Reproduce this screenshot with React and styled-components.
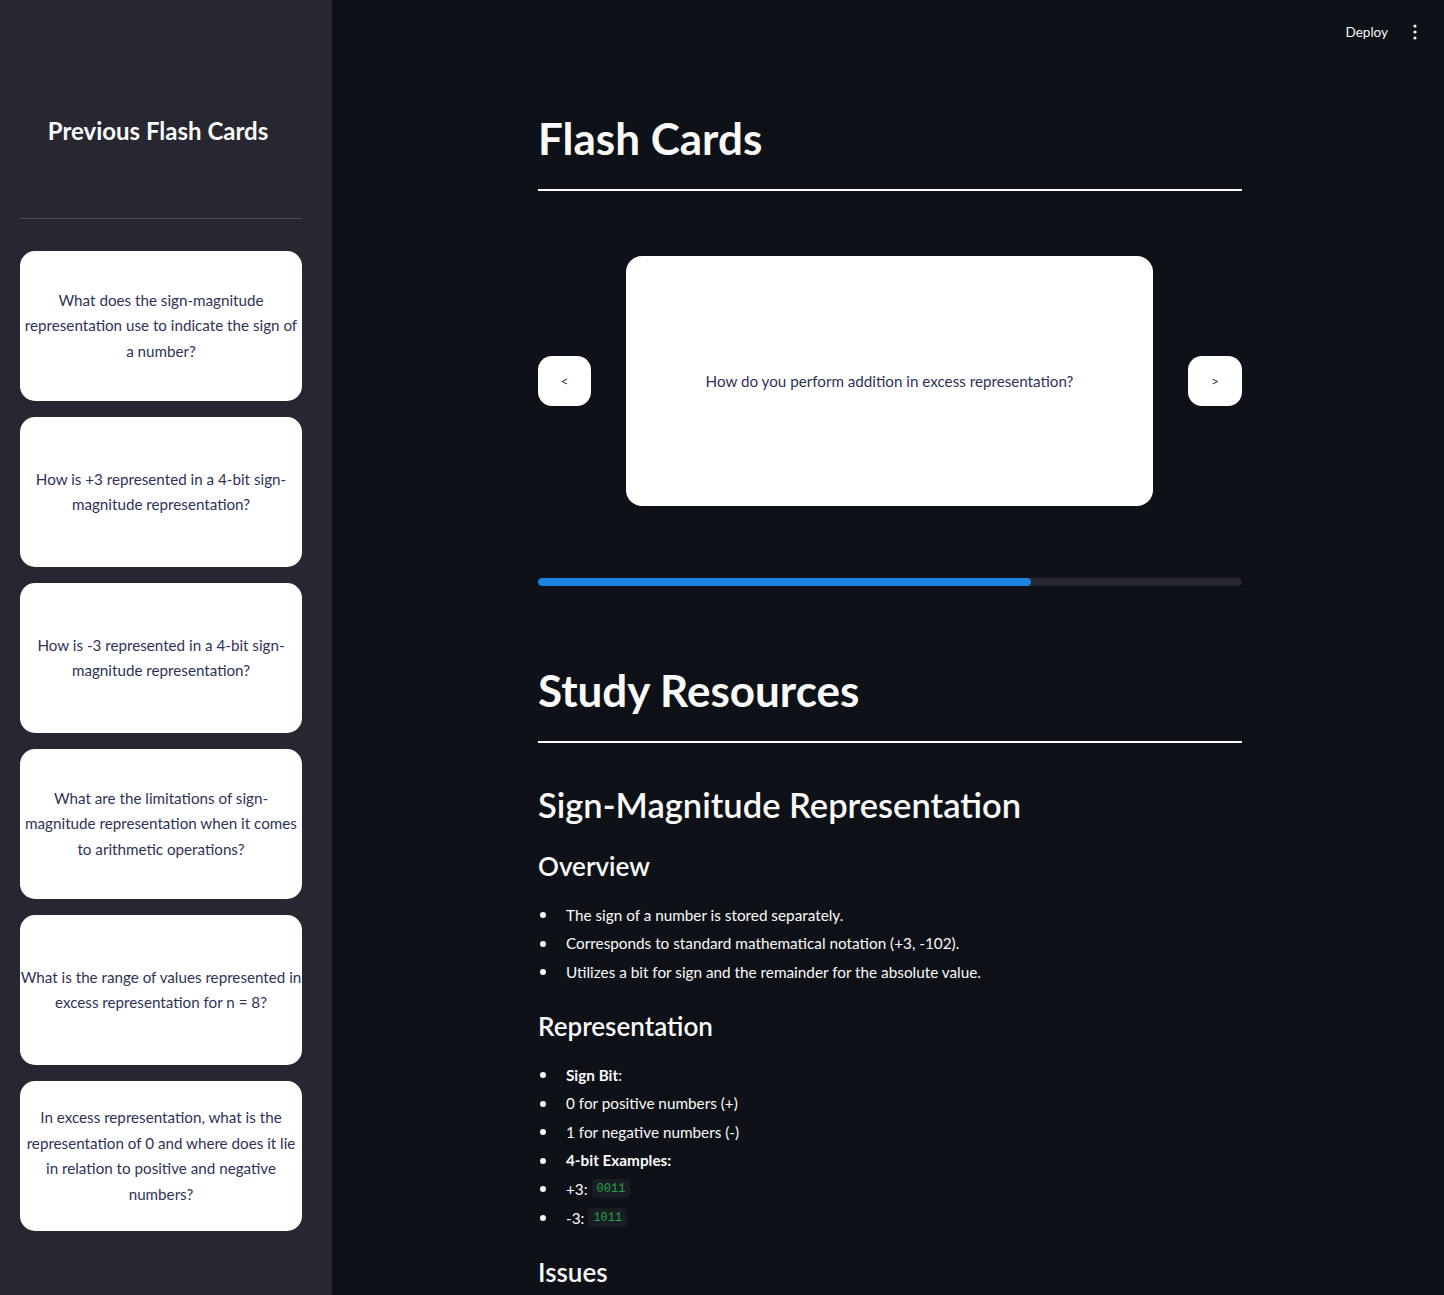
import React from "react";
import styled, { createGlobalStyle } from "styled-components";

const GlobalStyle = createGlobalStyle`
  html, body {
    margin: 0;
    padding: 0;
    height: 100%;
    overflow: hidden;
    background: #0e1117;
  }
  body {
    font-family: Lato, "Noto Sans", sans-serif;
    color: #fafafa;
  }
  * { box-sizing: border-box; }
`;

const Page = styled.div`
  display: flex;
  height: 100vh;
`;

const Sidebar = styled.aside`
  width: 332px;
  flex-shrink: 0;
  background: #262730;
  padding: 115px 30px 0 20px;
  display: flex;
  flex-direction: column;
`;

const SideTitle = styled.h2`
  margin: 0;
  font-size: 24px;
  line-height: 32px;
  font-weight: 700;
  text-align: center;
  padding-right: 6px;
  color: #fafafa;
`;

const SideRule = styled.hr`
  margin: 71px 0 32px;
  border: none;
  height: 1px;
  background: rgba(250, 250, 250, 0.2);
`;

const CardList = styled.div`
  display: flex;
  flex-direction: column;
  gap: 16px;
`;

const MiniCard = styled.div`
  height: 150px;
  background: #ffffff;
  border-radius: 15px;
  display: flex;
  align-items: center;
  justify-content: center;
  text-align: center;
  padding: 0;
  font-size: 15.2px;
  line-height: 25.5px;
  color: #2f3256;
`;

const Main = styled.main`
  flex: 1;
  display: flex;
  flex-direction: column;
  min-width: 0;
`;

const Header = styled.header`
  height: 64px;
  display: flex;
  align-items: center;
  justify-content: flex-end;
  gap: 25px;
  padding: 0 27px 0 0;
`;

const DeployButton = styled.span`
  font-size: 13.5px;
  color: #fafafa;
`;

const Content = styled.div`
  width: 704px;
  margin: 0 auto;
  padding: 48px 0 0;
  position: relative;
  left: 2px;
`;

const Title = styled.h1`
  margin: ${(p) => p.$top || 0}px 0 0;
  font-size: 44px;
  line-height: 52px;
  font-weight: 700;
  color: #fafafa;
`;

const Rule = styled.hr`
  margin: 25px 0 0;
  border: none;
  height: 2px;
  background: #fafafa;
`;

const CardRow = styled.div`
  margin-top: 65px;
  display: flex;
  align-items: center;
  justify-content: space-between;
`;

const NavButton = styled.button`
  width: ${(p) => p.$w}px;
  height: 50px;
  border: none;
  border-radius: 14px;
  background: #ffffff;
  color: #2f3256;
  font-family: inherit;
  font-size: 13px;
  cursor: pointer;
`;

const FlashCard = styled.div`
  width: 527px;
  height: 250px;
  background: #ffffff;
  border-radius: 16px;
  display: flex;
  align-items: center;
  justify-content: center;
  text-align: center;
  font-size: 15.2px;
  color: #2f3256;
`;

const Track = styled.div`
  margin-top: 72px;
  height: 8px;
  border-radius: 4px;
  background: #262730;
  overflow: hidden;
`;

const Fill = styled.div`
  height: 100%;
  border-radius: 4px;
  background: #1c83e1;
`;

const SubTitle = styled.h2`
  margin: 40px 0 0;
  font-size: 34.5px;
  line-height: 44px;
  font-weight: 600;
  color: #fafafa;
`;

const Section = styled.h3`
  margin: ${(p) => p.$top}px 0 0;
  font-size: 26px;
  line-height: 36px;
  font-weight: 600;
  color: #fafafa;
`;

const List = styled.ul`
  margin: 18px 0 0;
  padding: 0;
  list-style: none;
`;

const Item = styled.li`
  display: flex;
  align-items: center;
  height: 25.6px;
  font-size: 15.3px;
  margin-bottom: 3px;
  white-space: pre;
  &::before {
    content: "";
    width: 6px;
    height: 6px;
    border-radius: 50%;
    background: #fafafa;
    margin: 1px 20px 0 2px;
    flex-shrink: 0;
  }
  &:last-child { margin-bottom: 0; }
  b { font-weight: 700; }
`;

const Code = styled.code`
  display: inline-flex;
  align-items: center;
  height: 19px;
  font-family: "Liberation Mono", "DejaVu Sans Mono", monospace;
  font-size: 12px;
  color: #21a448;
  background: #1a1c23;
  border-radius: 4px;
  padding: 1px 5px 0;
  margin-left: 4px;
`;

const history = [
  "What does the sign-magnitude representation use to indicate the sign of a number?",
  "How is +3 represented in a 4-bit sign-magnitude representation?",
  "How is -3 represented in a 4-bit sign-magnitude representation?",
  "What are the limitations of sign-magnitude representation when it comes to arithmetic operations?",
  "What is the range of values represented in excess representation for n = 8?",
  "In excess representation, what is the representation of 0 and where does it lie in relation to positive and negative numbers?",
];

function KebabIcon() {
  return (
    <svg width="4" height="16" viewBox="0 0 4 16" fill="#fafafa">
      <circle cx="2" cy="2" r="1.6" />
      <circle cx="2" cy="8" r="1.6" />
      <circle cx="2" cy="14" r="1.6" />
    </svg>
  );
}

export default function App() {
  const progress = 70;
  return (
    <>
      <GlobalStyle />
      <Page>
        <Sidebar>
          <SideTitle>Previous Flash Cards</SideTitle>
          <SideRule />
          <CardList>
            {history.map((q) => (
              <MiniCard key={q}>{q}</MiniCard>
            ))}
          </CardList>
        </Sidebar>
        <Main>
          <Header>
            <DeployButton>Deploy</DeployButton>
            <KebabIcon />
          </Header>
          <Content>
            <Title>Flash Cards</Title>
            <Rule />
            <CardRow>
              <NavButton $w={53}>&lt;</NavButton>
              <FlashCard>How do you perform addition in excess representation?</FlashCard>
              <NavButton $w={54}>&gt;</NavButton>
            </CardRow>
            <Track>
              <Fill style={{ width: `${progress}%` }} />
            </Track>
            <Title $top={78}>Study Resources</Title>
            <Rule />
            <SubTitle>Sign-Magnitude Representation</SubTitle>
            <Section $top={21}>Overview</Section>
            <List>
              <Item>The sign of a number is stored separately.</Item>
              <Item>Corresponds to standard mathematical notation (+3, -102).</Item>
              <Item>Utilizes a bit for sign and the remainder for the absolute value.</Item>
            </List>
            <Section $top={23}>Representation</Section>
            <List>
              <Item><b>Sign Bit</b>:</Item>
              <Item>0 for positive numbers (+)</Item>
              <Item>1 for negative numbers (-)</Item>
              <Item><b>4-bit Examples:</b></Item>
              <Item>+3:<Code>0011</Code></Item>
              <Item>-3:<Code>1011</Code></Item>
            </List>
            <Section $top={24}>Issues</Section>
          </Content>
        </Main>
      </Page>
    </>
  );
}
